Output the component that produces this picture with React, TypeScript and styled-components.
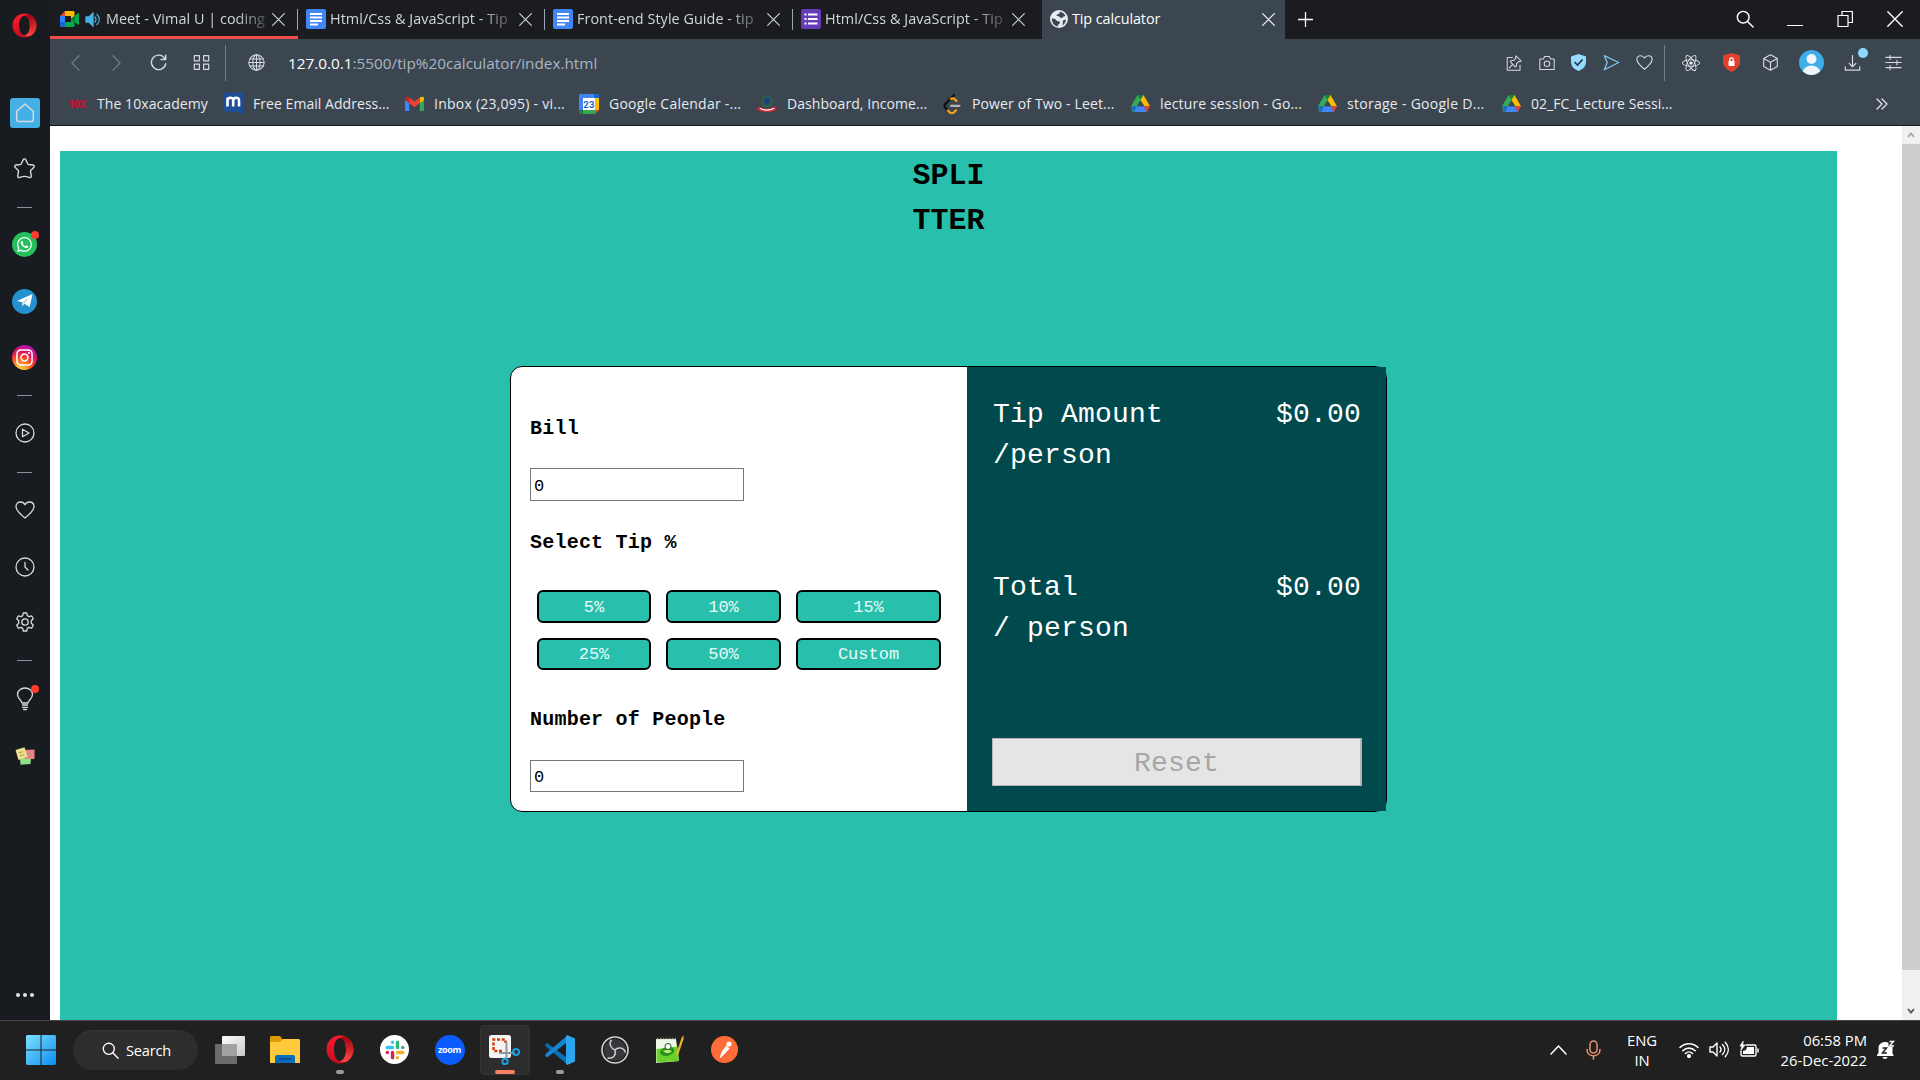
import React from "react";
import styled, { createGlobalStyle, css } from "styled-components";
import { FaReact, FaWhatsapp, FaInstagram } from "react-icons/fa";

const UI = `"Open Sans", "Noto Sans", sans-serif`;
const MONO = `"Liberation Mono", "DejaVu Sans Mono", monospace`;
const TEAL = "#28c0ac";
const DARK_TEAL = "#00494d";
const CHROME = "#3b4651";

const GlobalStyle = createGlobalStyle`
  *, *::before, *::after { box-sizing: border-box; }
  body { margin: 0; overflow: hidden; background: #181c20; font-family: ${UI}; }
`;

const Desktop = styled.div`
  width: 1920px;
  height: 1080px;
  display: grid;
  grid-template-rows: 1020px 60px;
  overflow: hidden;
`;

const Browser = styled.div`
  display: grid;
  grid-template-columns: 50px 1870px;
  min-height: 0;
`;

/* ---------- sidebar ---------- */

const Sidebar = styled.aside`
  display: flex;
  flex-direction: column;
  background: #181c20;
  color: #d6dbe0;
`;

const SideSlot = styled.div<{ $h: number; $top?: string }>`
  flex: none;
  height: ${(p) => p.$h}px;
  margin-top: ${(p) => p.$top ?? "0"};
  padding-right: 1px;
  display: flex;
  align-items: center;
  justify-content: center;
`;

const SideDash = styled.span`
  width: 15px;
  height: 1px;
  background: #8594a1;
`;

const HomeTile = styled.span`
  width: 30px;
  height: 30px;
  margin-left: 1px;
  border-radius: 3px;
  background: #45b0e6;
  display: grid;
  place-items: center;
`;

const Round = styled.span<{ $bg: string; $size: number }>`
  position: relative;
  flex: none;
  width: ${(p) => p.$size}px;
  height: ${(p) => p.$size}px;
  border-radius: 50%;
  background: ${(p) => p.$bg};
  color: #fff;
  display: grid;
  place-items: center;
`;

const Badged = styled.span`
  position: relative;
  display: grid;
  place-items: center;
`;

const Badge = styled.i<{ $color: string; $top: number; $right: number; $size?: number }>`
  position: absolute;
  top: ${(p) => p.$top}px;
  right: ${(p) => p.$right}px;
  width: ${(p) => p.$size ?? 8}px;
  height: ${(p) => p.$size ?? 8}px;
  border-radius: 50%;
  background: ${(p) => p.$color};
`;

/* ---------- window chrome ---------- */

const Window = styled.div`
  display: grid;
  grid-template-rows: 39px 86px 1px 1fr;
  min-height: 0;
`;

const TabStrip = styled.div`
  display: flex;
  background: #1a1c1f;
`;

const Tab = styled.div<{ $w: number; $active?: boolean; $playing?: boolean; $divider?: boolean }>`
  position: relative;
  flex: none;
  width: ${(p) => p.$w}px;
  height: 39px;
  padding: 2px ${(p) => (p.$active ? 10 : 13)}px 0 8px;
  display: flex;
  align-items: center;
  gap: 4px;
  color: ${(p) => (p.$active ? "#fff" : "#d3d6d9")};
  background: ${(p) => (p.$active ? CHROME : "transparent")};
  border-bottom: 3px solid ${(p) => (p.$playing ? "#f04c4a" : "transparent")};
  ${(p) =>
    p.$divider &&
    css`
      &::after {
        content: "";
        position: absolute;
        right: 0;
        top: 9px;
        width: 1px;
        height: 21px;
        background: #9aa8b4;
      }
    `}
`;

const TabTitle = styled.span<{ $fade?: boolean }>`
  flex: 1;
  min-width: 0;
  white-space: nowrap;
  font-size: 14.4px;
  letter-spacing: ${(p) => (p.$fade ? 0.05 : -0.1)}px;
  line-height: 22px;
  ${(p) =>
    p.$fade &&
    css`
      mask-image: linear-gradient(90deg, #000 80%, rgba(0, 0, 0, 0.3) 97%);
    `}
`;

const StripEnd = styled.div`
  flex: 1;
  display: flex;
  color: #fff;
  height: 38px;
`;

const Slot = styled.span<{ $w: number; $push?: boolean; $color?: string }>`
  flex: none;
  width: ${(p) => p.$w}px;
  margin-left: ${(p) => (p.$push ? "auto" : "0")};
  color: ${(p) => p.$color ?? "inherit"};
  display: flex;
  align-items: center;
  justify-content: center;
`;

const Bars = styled.div`
  background: ${CHROME};
  display: grid;
  grid-template-rows: 47px 39px;
`;

const AddressBar = styled.div`
  display: flex;
  align-items: center;
  color: #d5dae0;
  padding: 0 6px 0 5px;
`;

const Divider = styled.span`
  flex: none;
  width: 1px;
  height: 36px;
  background: #727d88;
`;

const Url = styled.span`
  flex: 1;
  padding-left: 1px;
  font-size: 15.3px;
  color: #a9b5c1;
  white-space: nowrap;
  b {
    font-weight: 400;
    color: #fff;
  }
`;

const Bookmarks = styled.div`
  display: flex;
  align-items: center;
  padding: 0 17px 4px;
  color: #e6eaee;
`;

const Bookmark = styled.div<{ $w: number; $ls: number }>`
  flex: none;
  width: ${(p) => p.$w}px;
  height: 35px;
  display: flex;
  align-items: center;
  gap: 10px;
  white-space: nowrap;
  font-size: 14px;
  letter-spacing: ${(p) => p.$ls}px;
`;

const IconBox = styled.span`
  flex: none;
  width: 20px;
  display: grid;
  place-items: center;
`;

const TenX = styled.b`
  font-size: 10px;
  letter-spacing: -0.3px;
  font-weight: 800;
  color: #c8102e;
`;

const ChromeLine = styled.div`
  background: #15181b;
`;

/* ---------- page ---------- */

const Viewport = styled.div`
  display: grid;
  grid-template-columns: 1852px 18px;
  background: #fff;
  min-height: 0;
`;

const Page = styled.div`
  padding: 25px 65px 0 10px;
  display: flex;
`;

const Main = styled.main`
  flex: 1;
  background: ${TEAL};
  font-family: ${MONO};
  display: flex;
  flex-direction: column;
  align-items: center;
`;

const Title = styled.h1`
  margin: 0;
  padding-top: 3px;
  height: 215px;
  font-size: 30px;
  line-height: 45px;
  font-weight: 700;
`;

const Card = styled.section`
  width: 877px;
  height: 446px;
  border: 1px solid #000;
  border-radius: 12px;
  background: #fff;
  display: grid;
  grid-template-columns: 456px 419px;
`;

const Form = styled.div`
  padding: 47px 0 0 19px;
  display: flex;
  flex-direction: column;
  align-items: flex-start;
`;

const Label = styled.label`
  display: block;
  height: 30px;
  line-height: 30px;
  font-size: 20px;
  letter-spacing: 0.22px;
  font-weight: 700;
`;

const Input = styled.input<{ $h: number; $top: number; $bottom: number }>`
  width: 214px;
  height: ${(p) => p.$h}px;
  margin: ${(p) => p.$top}px 0 ${(p) => p.$bottom}px;
  padding: 3px 4px 0 3px;
  border: 1px solid #767676;
  border-radius: 0;
  outline: none;
  font-family: ${MONO};
  font-size: 17px;
`;

const Tips = styled.div`
  display: grid;
  grid-template-columns: 114px 115px 145px;
  grid-template-rows: 33px 32px;
  gap: 15px;
  margin: 32px 0 35px 7px;
`;

const TipButton = styled.button`
  padding: 1px 0 0;
  border: 2px solid #000;
  border-radius: 6px;
  background: ${TEAL};
  color: #e8fbf8;
  font-family: ${MONO};
  font-size: 17px;
`;

const Results = styled.div`
  background: ${DARK_TEAL};
  color: #fff;
  padding: 27px 24px 25px 25px;
  display: flex;
  flex-direction: column;
  font-size: 28px;
  letter-spacing: 0.2px;
  line-height: 41px;
`;

const ResultRow = styled.div<{ $h: number }>`
  height: ${(p) => p.$h}px;
  padding: 0 1px;
  display: flex;
  justify-content: space-between;
`;

const Reset = styled.button`
  margin-top: auto;
  height: 48px;
  padding: 2px 0 0;
  border: 1px solid #b4b4b4;
  border-right-width: 2px;
  background: #e5e5e5;
  color: #a6a6a6;
  font-family: ${MONO};
  font-size: 28px;
  letter-spacing: 0.2px;
`;

const Scrollbar = styled.div`
  display: grid;
  grid-template-rows: 18px 826px 1fr 18px;
  background: #f0f0f0;
  place-items: center;
`;

const Thumb = styled.span`
  width: 18px;
  height: 100%;
  background: #cdcdcd;
`;

/* ---------- taskbar ---------- */

const Taskbar = styled.footer`
  background: #202020;
  border-top: 1px solid #484848;
  display: flex;
  align-items: center;
  color: #fff;
  padding: 0 0 2px 9px;
`;

const SearchPill = styled.div`
  width: 125px;
  height: 40px;
  margin: 0 4px 0 0;
  border-radius: 20px;
  background: #2d2d2d;
  border-top: 1px solid #363636;
  display: flex;
  align-items: center;
  gap: 7px;
  padding-left: 28px;
  font-size: 14.6px;
  letter-spacing: -0.2px;
`;

const TaskItem = styled.div<{ $active?: boolean; $dot?: string; $dotWidth?: number }>`
  position: relative;
  width: 50px;
  height: 50px;
  margin: 0 2.5px;
  border-radius: 5px;
  display: grid;
  place-items: center;
  background: ${(p) => (p.$active ? "#2d2d2d" : "transparent")};
  box-shadow: ${(p) => (p.$active ? "inset 0 0 0 1px #363636" : "none")};
  ${(p) =>
    p.$dot &&
    css`
      &::after {
        content: "";
        position: absolute;
        bottom: 1px;
        left: 50%;
        transform: translateX(-50%);
        width: ${p.$dotWidth ?? 8}px;
        height: 4px;
        border-radius: 2px;
        background: ${p.$dot};
      }
    `}
`;

const StartSlot = styled.div`
  width: 64px;
  display: grid;
  place-items: center;
`;

const ZoomText = styled.span`
  font-size: 9px;
  font-weight: 700;
  letter-spacing: -0.3px;
`;

const Tray = styled.div`
  margin-left: auto;
  display: flex;
  align-items: center;
  height: 57px;
`;

const TrayText = styled.div<{ $w: number; $align: "center" | "right"; $ls: number }>`
  width: ${(p) => p.$w}px;
  text-align: ${(p) => p.$align};
  font-size: 14.8px;
  line-height: 20px;
  white-space: nowrap;
  letter-spacing: ${(p) => p.$ls}px;
`;

/* ---------- icons ---------- */

type IconProps = {
  w?: number;
  h?: number;
  box?: string;
  sw?: number;
  children: React.ReactNode;
};

const Line = ({ w = 18, h, box = "0 0 20 20", sw = 1.3, children }: IconProps) => (
  <svg
    width={w}
    height={h ?? w}
    viewBox={box}
    fill="none"
    stroke="currentColor"
    strokeWidth={sw}
    strokeLinecap="round"
    strokeLinejoin="round"
  >
    {children}
  </svg>
);

const Close = ({ size = 13, sw = 1.2 }: { size?: number; sw?: number }) => (
  <Line w={size} sw={sw} box="0 0 14 14">
    <path d="M.7.7l12.6 12.6M13.3.7L.7 13.3" />
  </Line>
);

const OperaLogo = ({ w, h }: { w: number; h: number }) => (
  <svg width={w} height={h} viewBox="0 0 26 26" preserveAspectRatio="none">
    <defs>
      <linearGradient id="opA" x1="0" y1="0" x2="0" y2="1">
        <stop offset="0" stopColor="#ff1b2d" />
        <stop offset="1" stopColor="#c40d20" />
      </linearGradient>
      <linearGradient id="opB" x1="0" y1="0" x2="0" y2="1">
        <stop offset="0" stopColor="#a0000a" />
        <stop offset="1" stopColor="#ff4a4a" />
      </linearGradient>
    </defs>
    <path
      fillRule="evenodd"
      fill="url(#opA)"
      d="M13 .5C6 .5.5 6 .5 13S6 25.500 13 25.500 25.500 20 25.500 13 20 .5 13 .5zm0 2.300c3.300 0 5.600 4.500 5.600 10.200S16.300 23.200 13 23.200 7.400 18.700 7.400 13 9.700 2.800 13 2.800z"
    />
    <path
      fill="url(#opB)"
      d="M13 2.800c2-1.600 5-1.300 7.200 0C23.500 5 25.500 8.800 25.500 13s-2 8-5.300 10.200c-2.200 1.300-5.200 1.600-7.200 0 3.300 0 5.600-4.500 5.600-10.200S16.300 2.800 13 2.800z"
    />
  </svg>
);

const DocIcon = ({ color, list }: { color: string; list?: boolean }) => (
  <svg width="20" height="20" viewBox="0 0 20 20">
    <rect width="20" height="20" rx="2" fill={color} />
    {list ? (
      <path fill="#fff" d="M3.500 4.500h2v2h-2zM7 4.500h9.500v2H7zM3.500 9h2v2h-2zM7 9h9.500v2H7zM3.500 13.500h2v2h-2zM7 13.500h9.500v2H7z" />
    ) : (
      <path fill="#fff" d="M4 4h12v2H4zM4 7.500h12v2H4zM4 11h12v2H4zM4 14.500h8v2H4z" />
    )}
  </svg>
);

const MeetIcon = () => (
  <svg width="19" height="16" viewBox="0 0 19 16">
    <path fill="#ea4335" d="M0 5L5 0v5z" />
    <path fill="#fbbc04" d="M5 0h8c1 0 1.500.5 1.500 1.500V5L11 8V5H5z" />
    <path fill="#2684fc" d="M0 5h5v6H0z" />
    <path fill="#1a66d0" d="M0 11h5v5H1.500C.5 16 0 15.500 0 14.500z" />
    <path fill="#00a94b" d="M5 11h6V8l3.500 3v3.500c0 1-.5 1.500-1.500 1.500H5z" />
    <path fill="#00832d" d="M11 8l3.500-3v6z" />
    <path fill="#00a94b" d="M14.500 5L18 2.200c.5-.4 1 0 1 .5v10.600c0 .5-.5.9-1 .5L14.500 11z" />
  </svg>
);

const SpeakerBlue = () => (
  <svg width="16" height="15" viewBox="0 0 16 15" fill="none" stroke="#45b0e6" strokeWidth="1.300">
    <path fill="#45b0e6" d="M1 5h3l4-4v13l-4-4H1z" />
    <path d="M10 5c1.200 1.500 1.200 3.500 0 5M12 2.500c3 3 3 7 0 10" strokeLinecap="round" />
  </svg>
);

const EarthIcon = () => (
  <svg width="18" height="18" viewBox="0 0 18 18">
    <circle cx="9" cy="9" r="9" fill="#e8eaed" />
    <path
      fill={CHROME}
      d="M10 1.800c2.500.4 4.500 2 5.500 4.200l-2 .5-1.500 1.500-2-.5-1.500-1.500H6.500l.5-1.500 2-.5zM1.800 8.500l3 .3L7 11l2.500.5.5 1.500-2 2-.5 1.500C4 15.800 1.800 12.500 1.800 8.500zM13 10.500l3-1c-.2 2.500-1.500 4.700-3.500 6z"
    />
  </svg>
);

const MailM = () => (
  <svg width="19" height="23" viewBox="0 0 19 23">
    <path fill="#1f4e96" d="M0 1l19-1v22.500L13 20H2L0 18z" />
    <path fill="none" stroke="#fff" strokeWidth="2.600" d="M3.500 14.500V5.800M3.500 8.500c0-3.500 5.700-4 5.700 0v6M9.200 8.500c0-3.500 5.800-4 5.800 0v6" />
  </svg>
);

const GmailIcon = () => (
  <svg width="19" height="15" viewBox="0 0 19 15">
    <path fill="#4285f4" d="M0 3l4.300 3v9H1.300C.5 15 0 14.500 0 13.700z" />
    <path fill="#34a853" d="M14.700 6L19 3v10.700c0 .8-.5 1.300-1.300 1.300h-3z" />
    <path fill="#fbbc04" d="M14.700 1.500C17 0 19 .5 19 2.500V4l-4.300 3.200z" />
    <path fill="#c5221f" d="M0 4V2.500C0 .5 2 0 4.300 1.500v5.700z" />
    <path fill="#ea4335" d="M4.300 1.500L9.500 5.500l5.200-4v5.700l-5.200 4-5.200-4z" />
  </svg>
);

const CalendarIcon = () => (
  <svg width="20" height="20" viewBox="0 0 20 20">
    <path fill="#4285f4" d="M1.500 0H15v4H4v12H0V1.500C0 .5.5 0 1.500 0z" />
    <path fill="#1967d2" d="M15 0h3.500C19.500 0 20 .5 20 1.500V4h-5z" />
    <path fill="#fbbc04" d="M16 4h4v12h-4z" />
    <path fill="#34a853" d="M4 16h12v4H4z" />
    <path fill="#188038" d="M0 16h4v4H1.500C.5 20 0 19.500 0 18.500z" />
    <path fill="#ea4335" d="M16 16h4l-4 4z" />
    <path fill="#fff" d="M4 4h12v12H4z" />
    <text x="10" y="13.500" textAnchor="middle" fontSize="9.500" fontWeight="700" fontFamily="Roboto, sans-serif" fill="#1967d2">
      23
    </text>
  </svg>
);

const EmblemIcon = () => (
  <svg width="20" height="18" viewBox="0 0 20 18" fill="none">
    <circle cx="10" cy="6.500" r="5" stroke="#1e6a45" strokeWidth="2" />
    <path fill="#1d3f8f" d="M8 2.500h4l-.7 7H8.700z" />
    <path stroke="#d8232f" strokeWidth="3.500" d="M1 12.500c5 4 13 4 18 0" />
    <path stroke="#fff" strokeWidth="1.300" d="M3 13.300c4 2.500 10 2.500 14 0" />
  </svg>
);

const LeetIcon = () => (
  <svg width="18" height="20" viewBox="0 0 18 20" fill="none" strokeLinecap="round" strokeWidth="2.200">
    <path stroke="#111" d="M11 1.200L2.600 9.600c-1.300 1.300-1.300 3 0 4.300L5 16.500" />
    <path stroke="#ffa116" d="M5 16.500l1.800 1.800c1.300 1 2.900 1 4.200 0l2-2M8 4.800c1.600-.8 3-.3 4 .7l1.500 1.500" />
    <path stroke="#b3b3b3" d="M8 11.800h8.500" />
  </svg>
);

const DriveIcon = () => (
  <svg width="19" height="17" viewBox="0 0 19 17">
    <path fill="#34a853" d="M6.500 0h3L12 4.300 5.500 15.500 1.500 17 0 11.300z" />
    <path fill="#188038" d="M6.500 0h6L9.500 5z" />
    <path fill="#fbbc04" d="M12.500 0L19 11.300h-5.800L9.500 5z" />
    <path fill="#4285f4" d="M5.800 11.300h7.400l2.800 5.700H3z" />
    <path fill="#1967d2" d="M0 11.300h5.800L3 17z" />
    <path fill="#ea4335" d="M13.200 11.300H19L16 17z" />
    <path fill={CHROME} d="M9.500 5.300l3.600 6H5.900z" />
  </svg>
);

const GlobeLine = () => (
  <Line w={17} sw={1.2}>
    <circle cx="10" cy="10" r="9" />
    <ellipse cx="10" cy="10" rx="4.300" ry="9" />
    <path d="M10 1v18M1 10h18M2.200 5.800h15.600M2.200 14.200h15.600" />
  </Line>
);

const SearchIcon = ({ size = 18 }: { size?: number }) => (
  <Line w={size} sw={1.6}>
    <circle cx="8" cy="8" r="6.500" />
    <path d="M13 13l6 6" />
  </Line>
);

const Heart = ({ size }: { size: number }) => (
  <Line w={size} sw={1.3}>
    <path d="M10 18C5 14 1 10.500 1 6.600 1 3.800 3 2 5.500 2 7.500 2 9 3 10 4.800 11 3 12.500 2 14.500 2 17 2 19 3.800 19 6.600 19 10.500 15 14 10 18z" />
  </Line>
);

/* ---------- sections ---------- */

const SidePanel = () => (
  <Sidebar>
    <SideSlot $h={50}>
      <OperaLogo w={25} h={25} />
    </SideSlot>
    <SideSlot $h={70} $top="28px">
      <HomeTile>
        <Line w={20} sw={1.5}>
          <path d="M10 1L1.700 8.300V16.500c0 1.300.8 2 2 2h12.600c1.200 0 2-.7 2-2V8.300z" />
        </Line>
      </HomeTile>
    </SideSlot>
    <SideSlot $h={40}>
      <Line w={21}>
        <path d="M10 .8c.6 0 1 .4 1.300 1L13 5.500c.2.400.5.600 1 .700l4 .500c1.300.2 1.700 1.500.8 2.400l-2.700 2.600c-.3.300-.5.700-.4 1.200l.8 4c.2 1.300-1 2.200-2.200 1.600-3-1.400-5.600-1.400-8.600 0-1.200.6-2.400-.3-2.200-1.600l.8-4c.1-.5-.1-.9-.4-1.200L1.200 9.100C.3 8.200.7 6.900 2 6.700l4-.5c.5-.1.800-.3 1-.7l1.700-3.700c.3-.6.7-1 1.300-1z" />
      </Line>
    </SideSlot>
    <SideSlot $h={38}><SideDash /></SideSlot>
    <SideSlot $h={36}>
      <Round $bg="#25c05c" $size={25}>
        <FaWhatsapp size={17} />
        <Badge $color="#ff3b30" $top={-1} $right={-2} />
      </Round>
    </SideSlot>
    <SideSlot $h={78}>
      <Round $bg="#2592d0" $size={25}>
        <svg width="16" height="14" viewBox="0 0 16 14">
          <path fill="#fff" d="M0 7L15.500 0 12.700 13 7.300 9.700 5.300 12.300 5 8.300z" />
          <path fill="#bdd9ea" d="M5 8.300L12.500 3 7.300 9.700l-2 2.600z" />
        </svg>
      </Round>
    </SideSlot>
    <SideSlot $h={34}>
      <Round $bg="radial-gradient(circle at 30% 105%, #fdc53f 0 12%, #fb5a22 40%, #e2125f 62%, #8a1be0 100%)" $size={25}>
        <FaInstagram size={19} />
      </Round>
    </SideSlot>
    <SideSlot $h={42}><SideDash /></SideSlot>
    <SideSlot $h={34}>
      <Line w={20}>
        <circle cx="10" cy="10" r="9" />
        <path d="M7.500 6.300v7.400l6.500-3.700z" />
      </Line>
    </SideSlot>
    <SideSlot $h={44}><SideDash /></SideSlot>
    <SideSlot $h={32}><Heart size={20} /></SideSlot>
    <SideSlot $h={82}>
      <Line w={20}>
        <circle cx="10" cy="10" r="9" />
        <path d="M10 5.500V10l3 3" />
      </Line>
    </SideSlot>
    <SideSlot $h={28}>
      <Line w={20}>
        <circle cx="10" cy="10" r="3.200" />
        <path d="M8.300 1h3.400l.6 2.600 1.700 1 2.600-.8 1.700 3-2 1.900v2.600l2 1.900-1.700 3-2.600-.8-1.700 1-.6 2.600H8.300l-.6-2.600-1.700-1-2.600.8-1.700-3 2-1.900V8.700l-2-1.900 1.700-3 2.600.8 1.700-1z" />
      </Line>
    </SideSlot>
    <SideSlot $h={48}><SideDash /></SideSlot>
    <SideSlot $h={30}>
      <Badged>
        <Line w={18} h={24} box="0 0 18 24">
          <path d="M6 16c0-2.500-4.500-4-4.500-8.500C1.500 3.500 5 1 9 1s7.500 2.500 7.500 6.500C16.500 12 12 13.500 12 16zM6.500 18h5M6.500 20.300h5M7.500 22.500h3" />
        </Line>
        <Badge $color="#ff3b30" $top={-2} $right={-5} />
      </Badged>
    </SideSlot>
    <SideSlot $h={84}>
      <svg width="20" height="18" viewBox="0 0 20 18">
        <path fill="#8be28b" d="M5 11h11l-.5 6-10 .8z" />
        <path fill="#e88387" d="M9 3l10.500-.5v9.500H10z" />
        <path fill="#eee08a" d="M.5 3L9.500.3l3 9.500L3.500 13z" />
        <path stroke="#a39d69" d="M4 6l4-1.500M5 9l4-1.500M13 7h4" />
      </svg>
    </SideSlot>
    <SideSlot $h={50} $top="auto">
      <svg width="20" height="4" viewBox="0 0 20 4" fill="#dfe3e6">
        <circle cx="3" cy="2" r="2" />
        <circle cx="10" cy="2" r="2" />
        <circle cx="17" cy="2" r="2" />
      </svg>
    </SideSlot>
  </Sidebar>
);

const Tabs = () => (
  <TabStrip>
    <Tab $w={248} $playing $divider>
      <Slot $w={22}><MeetIcon /></Slot>
      <Slot $w={18}><SpeakerBlue /></Slot>
      <TabTitle $fade>Meet - Vimal U | coding</TabTitle>
      <Close />
    </Tab>
    <Tab $w={247} $divider>
      <DocIcon color="#4285f4" />
      <TabTitle $fade>Html/Css &amp; JavaScript - Tip</TabTitle>
      <Close />
    </Tab>
    <Tab $w={248} $divider>
      <DocIcon color="#4285f4" />
      <TabTitle $fade>Front-end Style Guide - tip</TabTitle>
      <Close />
    </Tab>
    <Tab $w={249}>
      <DocIcon color="#673ab7" list />
      <TabTitle $fade>Html/Css &amp; JavaScript - Tip</TabTitle>
      <Slot $w={14}><Close /></Slot>
      <Slot $w={0} />
    </Tab>
    <Tab $w={243} $active>
      <EarthIcon />
      <TabTitle>Tip calculator</TabTitle>
      <Close />
    </Tab>
    <StripEnd>
      <Slot $w={40}>
        <Line w={15} box="0 0 14 14" sw={1.2}><path d="M7 .5v13M.5 7h13" /></Line>
      </Slot>
      <Slot $w={50} $push><SearchIcon size={18} /></Slot>
      <Slot $w={50}>
        <Line w={16} sw={1.2} box="0 0 16 16"><path d="M.5 14.500h15" /></Line>
      </Slot>
      <Slot $w={50}>
        <Line w={16} box="0 0 16 16" sw={1.2}><path d="M1 4.500h10v11H1zM5 4.500v-4h10.400v11H11" /></Line>
      </Slot>
      <Slot $w={50}><Close size={16} sw={1.2} /></Slot>
    </StripEnd>
  </TabStrip>
);

const Address = () => (
  <AddressBar>
    <Slot $w={41} $color="#6c7883">
      <Line w={9} h={16} box="0 0 9 16"><path d="M8 .8L1 8l7 7.200" /></Line>
    </Slot>
    <Slot $w={41} $color="#6c7883">
      <Line w={9} h={16} box="0 0 9 16"><path d="M1 .8L8 8l-7 7.200" /></Line>
    </Slot>
    <Slot $w={43}>
      <Line w={17} sw={1.7}><path d="M18.500 11.500a8.500 8.500 0 1 1-1.200-6.300M18.500 1.500v5h-5.500" /></Line>
    </Slot>
    <Slot $w={42}>
      <Line w={17} sw={1.4}>
        <path d="M1.500 2h6v6h-6zM12.500 2h6v6h-6zM1.500 12h6v6h-6zM12.500 12h6v6h-6z" />
      </Line>
    </Slot>
    <Slot $w={3} />
    <Divider />
    <Slot $w={61}><GlobeLine /></Slot>
    <Url><b>127.0.0.1</b>:5500/tip%20calculator/index.html</Url>
    <Slot $w={33}>
      <Line w={16}>
        <path d="M8 3H1.500v16h16v-6.500M12.500 1L19 7.500l-2 1-1-.5-3 3v3l-1.500.8L5.500 8.500 6.500 7H9.500l3-3-.5-1zM8 12l-4 4.500" />
      </Line>
    </Slot>
    <Slot $w={33}>
      <Line w={16}>
        <path d="M1 5h4.500l1.500-3h6l1.500 3H19v13H1z" />
        <circle cx="10" cy="11" r="3.500" />
      </Line>
    </Slot>
    <Slot $w={31}>
      <svg width="15" height="17" viewBox="0 0 15 17">
        <path fill="#93dcff" d="M7.500 0l7.500 2.500V8c0 4.500-3.500 7.500-7.500 9C3.500 15.500 0 12.500 0 8V2.500z" />
        <path fill="none" stroke="#26323d" strokeWidth="1.600" d="M3.500 8l3 3 5-5.500" />
      </svg>
    </Slot>
    <Slot $w={34} $color="#7fc8ee">
      <Line w={17} sw={1.5}><path d="M1.500 2L18.500 10 1.500 18.500 5 10z" /></Line>
    </Slot>
    <Slot $w={32}><Heart size={17} /></Slot>
    <Slot $w={4} />
    <Divider />
    <Slot $w={6} />
    <Slot $w={40} $color="#f2f4f5"><FaReact size={18} /></Slot>
    <Slot $w={40}>
      <svg width="17" height="19" viewBox="0 0 17 19">
        <path fill="#e2402b" d="M8.500 0L17 2.500V9c0 5-4.500 8-8.500 10C4.500 17 0 14 0 9V2.500z" />
        <path fill="#fff" d="M5.500 8h6v5h-6z" />
        <path fill="none" stroke="#fff" strokeWidth="1.300" d="M6.800 8V6.500c0-2.300 3.400-2.300 3.400 0V8" />
      </svg>
    </Slot>
    <Slot $w={39}>
      <Line w={17}><path d="M10 1l8 4.300v9.400L10 19l-8-4.300V5.300zM2 5.300l8 4.400 8-4.400M10 9.700V19" /></Line>
    </Slot>
    <Slot $w={42}>
      <svg width="25" height="25" viewBox="0 0 25 25">
        <clipPath id="av"><circle cx="12.500" cy="12.500" r="12.500" /></clipPath>
        <g clipPath="url(#av)">
          <path fill="#3faee8" d="M0 0h25v25H0z" />
          <circle cx="12.500" cy="9" r="5" fill="#f0f6fb" />
          <ellipse cx="12.500" cy="22" rx="8.500" ry="6.500" fill="#f0f6fb" />
        </g>
      </svg>
    </Slot>
    <Slot $w={41}>
      <Badged>
        <Line w={17} sw={1.4}><path d="M10 2v13M6 11l4 4 4-4M1.500 15v4h17v-4" /></Line>
        <Badge $color="#8fd8ff" $top={-6} $right={-7} $size={10} />
      </Badged>
    </Slot>
    <Slot $w={41}>
      <Line w={17} sw={1.3}><path d="M1 4h18M1 10h18M1 16h18M6 1.500v5M14 7.500v5M6 13.500v5" /></Line>
    </Slot>
  </AddressBar>
);

const BOOKMARKS: { label: string; w: number; ls: number; icon: React.ReactNode }[] = [
  { label: "The 10xacademy", w: 156, ls: 0.08, icon: <TenX>10X</TenX> },
  { label: "Free Email Address...", w: 181, ls: 0.05, icon: <MailM /> },
  { label: "Inbox (23,095) - vi...", w: 175, ls: 0.24, icon: <GmailIcon /> },
  { label: "Google Calendar -...", w: 178, ls: 0.24, icon: <CalendarIcon /> },
  { label: "Dashboard, Income...", w: 185, ls: 0.06, icon: <EmblemIcon /> },
  { label: "Power of Two - Leet...", w: 188, ls: 0.14, icon: <LeetIcon /> },
  { label: "lecture session - Go...", w: 187, ls: 0.14, icon: <DriveIcon /> },
  { label: "storage - Google D...", w: 184, ls: 0.28, icon: <DriveIcon /> },
  { label: "02_FC_Lecture Sessi...", w: 180, ls: 0.05, icon: <DriveIcon /> },
];

const TIPS = ["5%", "10%", "15%", "25%", "50%", "Custom"];

const TipCalculator = () => (
  <Main>
    <Title>SPLI<br />TTER</Title>
    <Card>
      <Form>
        <Label>Bill</Label>
        <Input defaultValue="0" $h={33} $top={24} $bottom={27} />
        <Label>Select Tip %</Label>
        <Tips>
          {TIPS.map((t) => <TipButton key={t}>{t}</TipButton>)}
        </Tips>
        <Label>Number of People</Label>
        <Input defaultValue="0" $h={32} $top={25} $bottom={0} />
      </Form>
      <Results>
        <ResultRow $h={173}>
          <span>Tip Amount<br />/person</span>
          <span>$0.00</span>
        </ResultRow>
        <ResultRow $h={90}>
          <span>Total<br />/ person</span>
          <span>$0.00</span>
        </ResultRow>
        <Reset>Reset</Reset>
      </Results>
    </Card>
  </Main>
);

const SystemBar = () => (
  <Taskbar>
    <StartSlot>
      <svg width="30" height="30" viewBox="0 0 30 30">
        <defs>
          <linearGradient id="win" x1="0" y1="0" x2="1" y2="1">
            <stop offset="0" stopColor="#7fe0ff" />
            <stop offset="1" stopColor="#0a8df0" />
          </linearGradient>
        </defs>
        <path fill="url(#win)" d="M1 0h13.500v14.500H0V1zM15.500 0H29l1 1v13.500H15.500zM0 15.500h14.500V30H1l-1-1zM15.500 15.500H30V29l-1 1H15.500z" />
      </svg>
    </StartSlot>
    <SearchPill>
      <Slot $w={18}><SearchIcon size={17} /></Slot>
      Search
    </SearchPill>
    <TaskItem>
      <svg width="30" height="28" viewBox="0 0 30 28">
        <defs>
          <linearGradient id="tv" x1="0" y1="0" x2="1" y2="1">
            <stop offset="0" stopColor="#fff" />
            <stop offset="1" stopColor="#c8c8c8" />
          </linearGradient>
        </defs>
        <rect x="7" y="0" width="23" height="20" rx="1" fill="url(#tv)" />
        <rect x="0" y="8" width="22" height="20" rx="1" fill="#6b6b6b" />
        <path fill="#a2a2a2" d="M7 8h15v12H7z" />
      </svg>
    </TaskItem>
    <TaskItem>
      <svg width="30" height="27" viewBox="0 0 30 27">
        <path fill="#e09b00" d="M1 0h9l3 4v5H0V1z" />
        <path fill="#ffcb3d" d="M0 6h10l3-3h16l1 1v23H0z" />
        <path fill="#0b6cbf" d="M5 27v-6c0-1.300.7-2 2-2h16c1.300 0 2 .7 2 2v6z" />
        <path stroke="#064a86" strokeWidth="1.500" d="M9 23h12" />
      </svg>
    </TaskItem>
    <TaskItem $dot="#9a9a9a"><OperaLogo w={28} h={29} /></TaskItem>
    <TaskItem>
      <Round $bg="#fff" $size={29}>
        <svg width="24" height="24" viewBox="0 0 24 24" strokeWidth="3.400" strokeLinecap="round" fill="none">
          <path stroke="#36c5f0" d="M9.500 4.300V4.200M4.300 9.500h5.200" />
          <path stroke="#2eb67d" d="M14.500 4.200v5.300M19.800 9.500h-.1" />
          <path stroke="#ecb22e" d="M14.500 19.800v-.1M14.500 14.500h5.300" />
          <path stroke="#e01e5a" d="M9.500 14.500v5.300M4.300 14.500h.1" />
        </svg>
      </Round>
    </TaskItem>
    <TaskItem>
      <Round $bg="#0b5cff" $size={30}><ZoomText>zoom</ZoomText></Round>
    </TaskItem>
    <TaskItem $active $dot="#f58065" $dotWidth={20}>
      <svg width="31" height="30" viewBox="0 0 31 30" fill="none">
        <rect x="0" y="0" width="22" height="23" rx="2.500" fill="#f4f4f4" />
        <path stroke="#d83b01" strokeWidth="2.500" strokeDasharray="3 1.700" d="M13 16H4.500V4.500h12V8" />
        <path stroke="#8e979e" strokeWidth="2" d="M17.500 7v17M10 18h16" />
        <circle cx="27" cy="17" r="3" stroke="#1e9de0" strokeWidth="2" />
        <circle cx="16" cy="26.500" r="2.700" stroke="#1e9de0" strokeWidth="2" />
      </svg>
    </TaskItem>
    <TaskItem $dot="#9a9a9a">
      <svg width="30" height="30" viewBox="0 0 30 30">
        <path fill="#0a6fb8" d="M0 10l2-2 21 15.500V30L2 12.500z" />
        <path fill="#1486d0" d="M0 20.500l2 2L23 6.500V0L1.500 18z" />
        <path fill="#2ba5f0" d="M22 0l8 3.500v23L22 30l-1-1.500v-27z" />
      </svg>
    </TaskItem>
    <TaskItem>
      <svg width="28" height="28" viewBox="0 0 28 28" fill="none">
        <circle cx="14" cy="14" r="13" fill="#1c1a1e" stroke="#d2d2d2" strokeWidth="1.600" />
        <circle cx="14" cy="14" r="11" fill="#39373b" />
        <path fill="#131114" d="M14 14C8 13 6.500 7.500 10 3.800 8.500 8 11 11.500 14 14zM14 14c4-4 10-2.500 11 2.500C22 13 17.500 12.500 14 14zM14 14c2 5.500-2 9.800-7.500 8.500 4.500-1 6.500-4 7.500-8.500z" />
        <path stroke="#cfcfcf" strokeWidth="1.500" d="M10.500 3.800c-3.500 4.200 0 9 3.500 10.200M24.500 16.500c-1.500-5-7.500-6-10.500-2.500M6.500 22c5.500 1 9-3 7.500-8" />
      </svg>
    </TaskItem>
    <TaskItem>
      <svg width="29" height="29" viewBox="0 0 29 29">
        <path fill="#eef6e6" d="M1 4h20l3 22-23 2z" />
        <path fill="#6bd02a" d="M1.500 14l21-2.500L24 26 1.500 27.500z" />
        <path stroke="#7c8a7a" strokeWidth="1.500" strokeDasharray="1.500 1.500" d="M2 3.500h19" />
        <path fill="#2e8f1d" d="M5 17c2-5 11-7 14-3 1.500 3-3 7-8 7-3 0-6-1.500-6-4z" />
        <circle cx="13" cy="11.500" r="3" fill="#fff" stroke="#1f5a15" />
        <path fill="#b8ef74" d="M8 16c3-1.500 6-1.500 9 0-2 2.500-6 3-9 0z" />
        <path stroke="#f3b62b" strokeWidth="2.200" d="M28 2l-6 18" />
        <path stroke="#c23e2c" strokeWidth="2.200" d="M28.500.5L28 2.500" />
      </svg>
    </TaskItem>
    <TaskItem>
      <Round $bg="#ff6c37" $size={27}>
        <svg width="18" height="20" viewBox="0 0 18 20">
          <circle cx="13" cy="4" r="2.600" fill="#fff" />
          <path fill="#fff" d="M10.500 5.500l3 3-4.500 5L4.500 18l-.8-.5L6 11z" />
        </svg>
      </Round>
    </TaskItem>
    <Tray>
      <Slot $w={35}>
        <Line w={17} h={10} box="0 0 17 10" sw={1.5}><path d="M1 9l7.500-8L16 9" /></Line>
      </Slot>
      <Slot $w={35} $color="#e8936f">
        <Line w={15} h={20} box="0 0 15 20" sw={1.5}>
          <rect x="4" y="1" width="7" height="12" rx="3.500" />
          <path d="M1 9.500c0 8.500 13 8.500 13 0M7.500 16v3.200" />
        </Line>
      </Slot>
      <TrayText $w={62} $align="center" $ls={-0.1}>ENG<br />IN</TrayText>
      <Slot $w={31}>
        <Line w={20} h={16} box="0 0 20 16" sw={1.6}>
          <path d="M1 5.500c5-5 13-5 18 0M3.800 8.700c3.500-3.500 8.900-3.500 12.400 0M6.500 11.500c2-2 5-2 7 0" />
          <circle cx="10" cy="14" r="1.300" fill="currentColor" />
        </Line>
      </Slot>
      <Slot $w={30}>
        <Line w={20} h={17} box="0 0 20 17" sw={1.4}>
          <path d="M1 6h3l4-4v13l-4-4H1zM11 6c1.300 1.500 1.300 3.500 0 5M13.500 3.500c3 3 3 7 0 10M16.300 1.300c4 4.500 4 10 0 14.400" />
        </Line>
      </Slot>
      <Slot $w={30}>
        <Line w={20} h={17} box="0 0 20 17" sw={1.4}>
          <path d="M7 4h8.500c1 0 1.500.5 1.500 1.500v8c0 1-.5 1.500-1.500 1.500h-12C2.500 15 2 14.500 2 13.500V10M19 8v3" />
          <path fill="currentColor" strokeWidth="0" d="M8 6h7v7H4v-3l3-1z" />
          <path fill="currentColor" strokeWidth="0.800" d="M4 .5L1 5h2L2 9l4-5H4z" />
        </Line>
      </Slot>
      <TrayText $w={103} $align="right" $ls={0}>06:58 PM<br />26-Dec-2022</TrayText>
      <Slot $w={38}>
        <svg width="18" height="20" viewBox="0 0 18 20">
          <path fill="#fff" d="M8 2c1.500 0 2.500.3 3.500.8V7h4v6.500l1 1.500v1H0v-1l1.500-2V8C1.500 4.500 4.500 2 8 2zM5.500 17h5c-.5 2.500-4.500 2.500-5 0z" />
          <path fill="none" stroke="#202020" strokeWidth="1.500" d="M5.500 8h4l-4 5h4.500" />
          <path fill="none" stroke="#fff" strokeWidth="1.400" d="M12.500 1.500h4l-4 4.500h4.500" />
        </svg>
      </Slot>
      <Slot $w={15} />
    </Tray>
  </Taskbar>
);

export default function App() {
  return (
    <Desktop>
      <GlobalStyle />
      <Browser>
        <SidePanel />
        <Window>
          <Tabs />
          <Bars>
            <Address />
            <Bookmarks>
              {BOOKMARKS.map((b) => (
                <Bookmark key={b.label} $w={b.w} $ls={b.ls}>
                  <IconBox>{b.icon}</IconBox>
                  {b.label}
                </Bookmark>
              ))}
              <Slot $w={42} $push>
                <Line w={12} h={12} box="0 0 12 12" sw={1.2}><path d="M1 1l5 5-5 5M6 1l5 5-5 5" /></Line>
              </Slot>
            </Bookmarks>
          </Bars>
          <ChromeLine />
          <Viewport>
            <Page>
              <TipCalculator />
            </Page>
            <Scrollbar>
              <svg width="8" height="6" viewBox="0 0 8 6"><path fill="none" stroke="#a6a6a6" strokeWidth="1.800" d="M1 5l3-3.500L7 5" /></svg>
              <Thumb />
              <span />
              <svg width="8" height="6" viewBox="0 0 8 6"><path fill="none" stroke="#555" strokeWidth="1.800" d="M1 1l3 3.500L7 1" /></svg>
            </Scrollbar>
          </Viewport>
        </Window>
      </Browser>
      <SystemBar />
    </Desktop>
  );
}
